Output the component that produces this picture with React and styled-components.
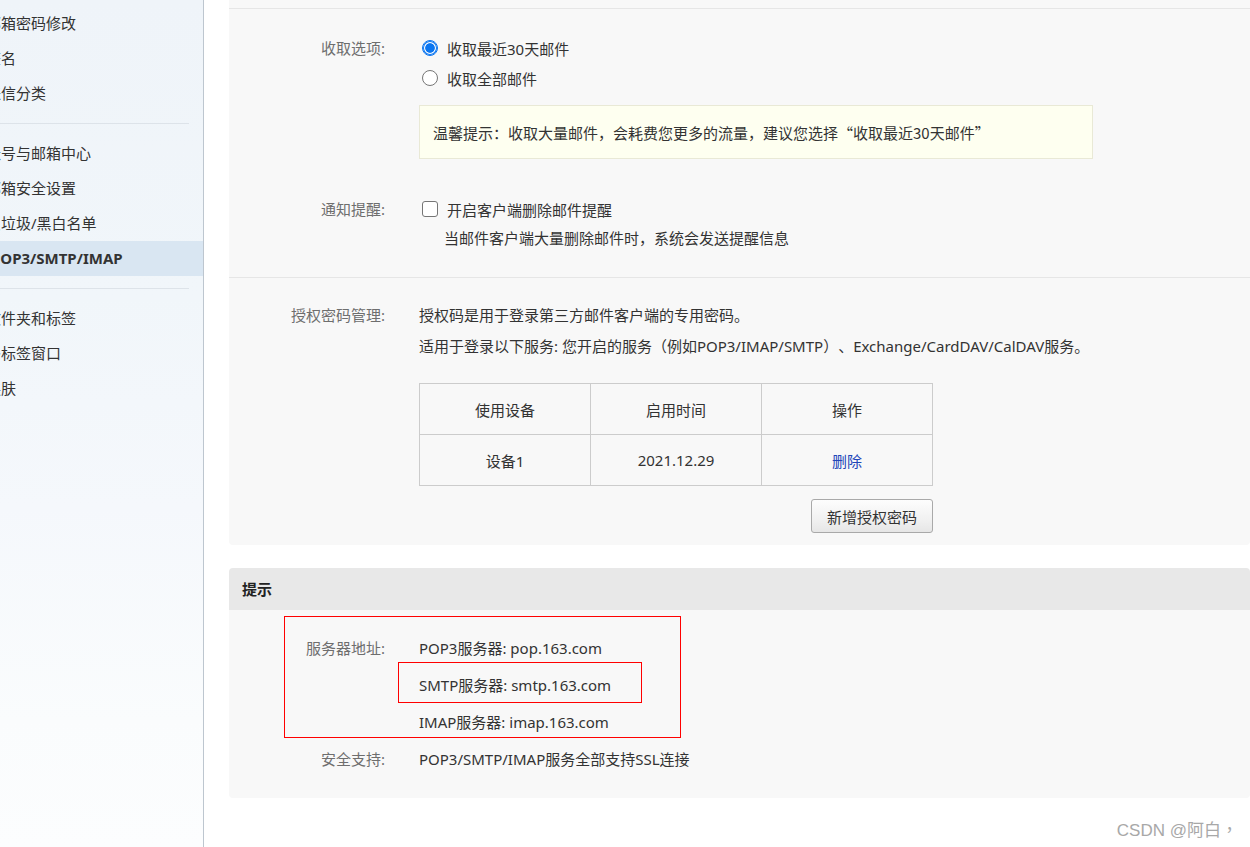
import React from 'react';
import styled, { createGlobalStyle } from 'styled-components';

const GlobalStyle = createGlobalStyle`
  html, body {
    margin: 0;
    padding: 0;
    height: 100%;
    overflow: hidden;
    background: #fff;
  }
  body {
    font-family: "Noto Sans", "Noto Sans CJK SC", sans-serif;
    font-size: 15px;
    color: #333;
    text-spacing-trim: space-all;
  }
`;

const navGroups = [
  ['邮箱密码修改', '签名', '来信分类'],
  ['账号与邮箱中心', '邮箱安全设置', '反垃圾/黑白名单', 'POP3/SMTP/IMAP'],
  ['文件夹和标签', '多标签窗口', '换肤'],
];

const servers = [
  'POP3服务器: pop.163.com',
  'SMTP服务器: smtp.163.com',
  'IMAP服务器: imap.163.com',
];

function App() {
  return (
    <Page>
      <GlobalStyle />
      <Sidebar>
        {navGroups.map((group, gi) => (
          <React.Fragment key={gi}>
            {gi > 0 && <NavDivider />}
            <NavGroup>
              {group.map((item) => (
                <NavItem key={item} active={item === 'POP3/SMTP/IMAP'}>
                  {item}
                </NavItem>
              ))}
            </NavGroup>
          </React.Fragment>
        ))}
      </Sidebar>

      <Main>
        <Card>
          <TopStrip />
          <Section padding="24px 0 25px" divided>
            <Row>
              <Label lh={30}>收取选项:</Label>
              <Content>
                <OptionLine>
                  <Radio checked />
                  <OptionText>收取最近30天邮件</OptionText>
                </OptionLine>
                <OptionLine>
                  <Radio />
                  <OptionText>收取全部邮件</OptionText>
                </OptionLine>
                <TipBox>温馨提示：收取大量邮件，会耗费您更多的流量，建议您选择“收取最近30天邮件”</TipBox>
              </Content>
            </Row>
            <Row gap={35}>
              <Label lh={30}>通知提醒:</Label>
              <Content>
                <OptionLine>
                  <Checkbox />
                  <OptionText>开启客户端删除邮件提醒</OptionText>
                </OptionLine>
                <HintLine>当邮件客户端大量删除邮件时，系统会发送提醒信息</HintLine>
              </Content>
            </Row>
          </Section>

          <Section padding="22px 0 12px">
            <Row>
              <Label lh={31}>授权密码管理:</Label>
              <Content>
                <TextLine lh={31}>授权码是用于登录第三方邮件客户端的专用密码。</TextLine>
                <TextLine lh={31}>
                  适用于登录以下服务: 您开启的服务（例如POP3/IMAP/SMTP）、Exchange/CardDAV/CalDAV服务。
                </TextLine>
                <TableBlock>
                  <DeviceTable>
                    <thead>
                      <tr>
                        <Cell as="th">使用设备</Cell>
                        <Cell as="th">启用时间</Cell>
                        <Cell as="th">操作</Cell>
                      </tr>
                    </thead>
                    <tbody>
                      <tr>
                        <Cell>设备1</Cell>
                        <Cell>2021.12.29</Cell>
                        <Cell>
                          <DeleteLink href="#">删除</DeleteLink>
                        </Cell>
                      </tr>
                    </tbody>
                  </DeviceTable>
                  <AddButton type="button">新增授权密码</AddButton>
                </TableBlock>
              </Content>
            </Row>
          </Section>
        </Card>

        <TipCard>
          <TipHeader>提示</TipHeader>
          <TipBody>
            <Row>
              <Label lh={37}>服务器地址:</Label>
              <Content>
                {servers.map((s) => (
                  <TextLine key={s} lh={37}>{s}</TextLine>
                ))}
              </Content>
            </Row>
            <Row>
              <Label lh={37}>安全支持:</Label>
              <Content>
                <TextLine lh={37}>POP3/SMTP/IMAP服务全部支持SSL连接</TextLine>
              </Content>
            </Row>
            <Marker left={55} top={6} width={397} height={122} />
            <Marker left={169} top={52} width={244} height={41} />
          </TipBody>
        </TipCard>
      </Main>

      <Watermark>CSDN @阿白，</Watermark>
    </Page>
  );
}

export default App;

const Page = styled.div`
  position: relative;
  display: flex;
  height: 847px;
  overflow: hidden;
`;

const Sidebar = styled.aside`
  width: 203px;
  flex-shrink: 0;
  border-right: 1px solid #bdc6cf;
  background: linear-gradient(
    180deg,
    #eff4f9 0%,
    #f1f6fa 35%,
    #f5f8fc 60%,
    #fafcfd 85%,
    #fcfdfe 100%
  );
  overflow: hidden;
  padding-top: 6px;
`;

const NavGroup = styled.ul`
  list-style: none;
  margin: 0;
  padding: 0;
`;

const NavItem = styled.li`
  height: 35px;
  line-height: 35px;
  text-indent: ${(p) => (p.active ? '-9px' : '-14px')};
  white-space: nowrap;
  font-size: 15px;
  color: #333;
  font-weight: ${(p) => (p.active ? 700 : 400)};
  background: ${(p) => (p.active ? '#d9e6f2' : 'transparent')};
`;

const NavDivider = styled.div`
  width: 189px;
  height: 1px;
  background: #dde3e9;
  margin: 12px 0 12px;
`;

const Main = styled.main`
  flex: 1;
  min-width: 0;
  padding-left: 25px;
  background: #fff;
`;

const Card = styled.div`
  background: #f8f8f8;
  border-radius: 0 0 4px 4px;
`;

const TopStrip = styled.div`
  height: 8px;
  border-bottom: 1px solid #e6e6e6;
`;

const Section = styled.section`
  padding: ${(p) => p.padding};
  border-bottom: ${(p) => (p.divided ? '1px solid #e6e6e6' : 'none')};
`;

const Row = styled.div`
  display: flex;
  align-items: flex-start;
  margin-top: ${(p) => (p.gap ? `${p.gap}px` : '0')};
`;

const Label = styled.div`
  width: 156px;
  flex-shrink: 0;
  text-align: right;
  color: #6e6e6e;
  line-height: ${(p) => p.lh}px;
  white-space: nowrap;
`;

const Content = styled.div`
  padding-left: 34px;
  display: flex;
  flex-direction: column;
  align-items: flex-start;
`;

const OptionLine = styled.div`
  height: 30px;
  display: flex;
  align-items: center;
`;

const Radio = styled.span`
  width: 16px;
  height: 16px;
  box-sizing: border-box;
  margin-left: 3px;
  border-radius: 50%;
  border: 1px solid ${(p) => (p.checked ? '#0a75f0' : '#767676')};
  background: ${(p) =>
    p.checked
      ? 'radial-gradient(circle, #0a75f0 0 4.4px, #fff 5.2px)'
      : '#fff'};
  box-shadow: ${(p) => (p.checked ? 'inset 0 0 0 1px #0a75f0' : 'none')};
`;

const Checkbox = styled.span`
  width: 16px;
  height: 16px;
  box-sizing: border-box;
  margin-left: 3px;
  border-radius: 3px;
  border: 1px solid #767676;
  background: #fff;
`;

const OptionText = styled.span`
  margin-left: 9px;
  color: #333;
  white-space: nowrap;
`;

const TipBox = styled.div`
  margin-top: 12px;
  width: 674px;
  height: 54px;
  box-sizing: border-box;
  display: flex;
  align-items: center;
  padding-left: 13px;
  background: #fefff0;
  border: 1px solid #e9e9d6;
  font-family: "Noto Sans CJK SC", sans-serif;
  white-space: nowrap;
`;

const HintLine = styled.div`
  padding-left: 25px;
  line-height: 28px;
  white-space: nowrap;
`;

const TextLine = styled.div`
  line-height: ${(p) => p.lh}px;
  white-space: nowrap;
`;

const TableBlock = styled.div`
  margin-top: 21px;
  width: 514px;
  display: flex;
  flex-direction: column;
  align-items: flex-end;
`;

const DeviceTable = styled.table`
  width: 514px;
  border-collapse: collapse;
  table-layout: fixed;
`;

const Cell = styled.td`
  height: 50px;
  padding: 0;
  border: 1px solid #cccccc;
  text-align: center;
  font-weight: 400;
  font-size: 15px;
  color: #333;
`;

const DeleteLink = styled.a`
  color: #2146b8;
  text-decoration: none;
`;

const AddButton = styled.button`
  margin-top: 13px;
  width: 122px;
  height: 34px;
  border: 1px solid #a9a9a9;
  border-radius: 3px;
  background: linear-gradient(180deg, #fdfdfd 0%, #f1f1f1 60%, #e6e6e6 100%);
  font-family: inherit;
  font-size: 15px;
  color: #333;
  padding: 0;
  cursor: pointer;
`;

const TipCard = styled.div`
  margin-top: 23px;
  border-radius: 4px;
`;

const TipHeader = styled.div`
  height: 42px;
  line-height: 42px;
  padding-left: 13px;
  background: #e8e8e8;
  border-radius: 4px 4px 0 0;
  font-weight: 700;
  color: #222;
`;

const TipBody = styled.div`
  position: relative;
  background: #f8f8f8;
  padding: 20px 0 20px;
  border-radius: 0 0 4px 4px;
`;

const Marker = styled.div`
  position: absolute;
  left: ${(p) => p.left}px;
  top: ${(p) => p.top}px;
  width: ${(p) => p.width}px;
  height: ${(p) => p.height}px;
  box-sizing: border-box;
  border: 1px solid #ff0000;
  pointer-events: none;
`;

const Watermark = styled.div`
  position: absolute;
  right: 12px;
  bottom: 6px;
  font-family: "Liberation Sans", "Noto Sans CJK TC", sans-serif;
  font-size: 17px;
  color: #a8a8a8;
  white-space: nowrap;
`;
